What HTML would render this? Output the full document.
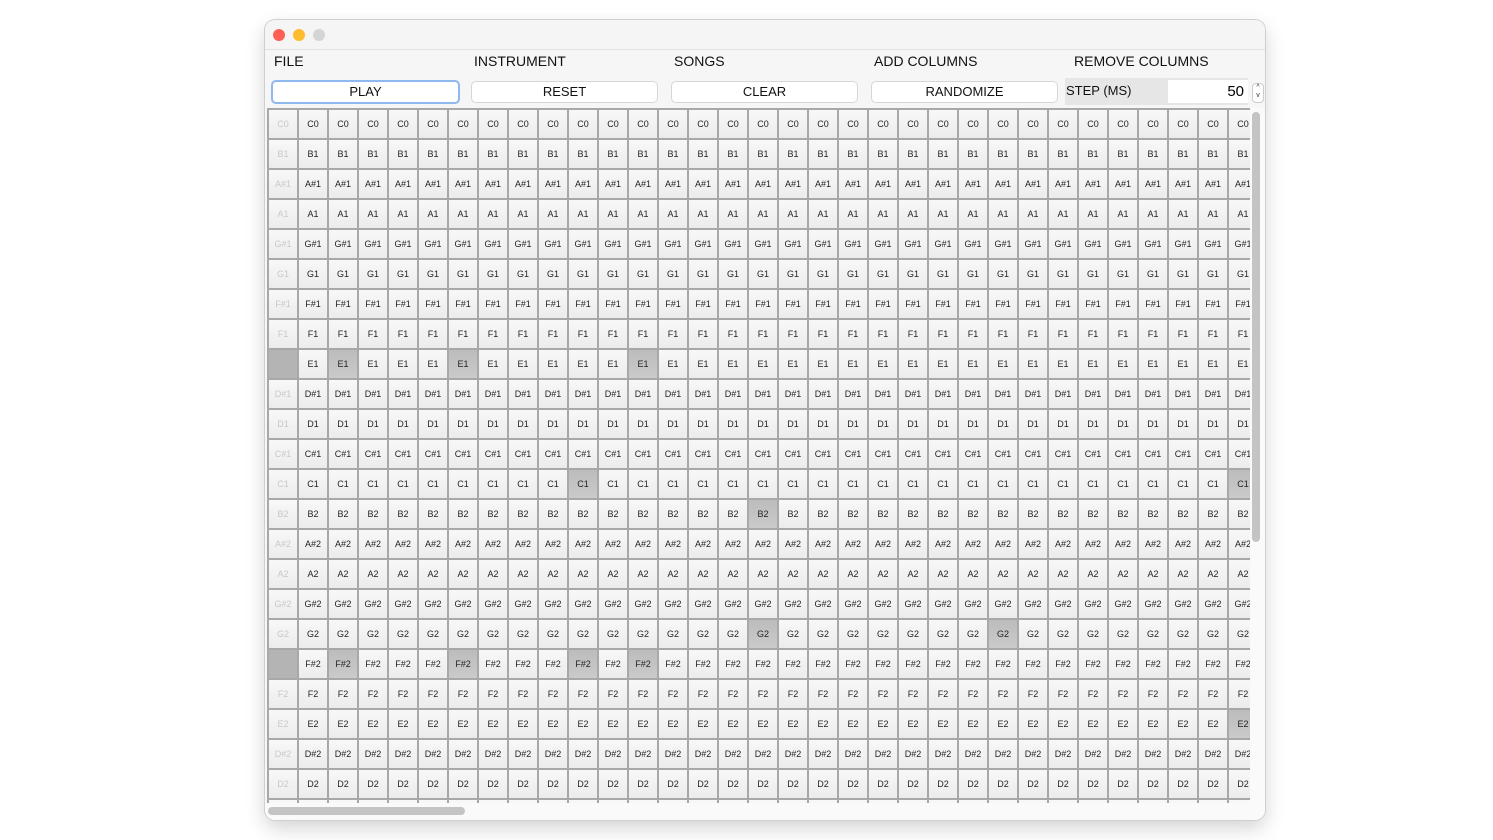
<!DOCTYPE html><html><head><style>
body{margin:0;width:1493px;height:840px;background:#fff;font-family:"Liberation Sans",sans-serif;position:relative;overflow:hidden}
.win{position:absolute;left:265px;top:20px;width:1000px;height:800px;border-radius:10px;background:#f6f6f6;box-shadow:0 0 0 1px #cfcfcf,0 8px 20px rgba(0,0,0,.18);overflow:hidden}
.tb{height:29px;border-bottom:1px solid #e2e2e2;background:#f5f5f5}
.dot{position:absolute;top:9px;width:12px;height:12px;border-radius:50%}
.menu{position:absolute;top:33px;font-size:14px;color:#111}
.btn{position:absolute;top:61px;width:185px;height:20px;border:1px solid #d6d6d6;border-radius:5px;background:#fff;font-size:13px;text-align:center;line-height:20px;color:#111}
.grid{position:absolute;left:2px;top:88px;width:981px;height:695px;overflow:hidden;background:#f4f4f4;border-top:2px solid #a8a8a8;border-left:2px solid #a8a8a8}
.r{display:flex;white-space:nowrap;width:1100px}
.r i,.r u,.r s{flex:0 0 28px;height:28px;border-right:2px solid #a8a8a8;border-bottom:2px solid #a8a8a8;font-style:normal;text-decoration:none;font-size:9px;line-height:28px;text-align:center;color:#222;background:linear-gradient(#f8f8f8,#ececec)}
.r u{background:linear-gradient(#bcbcbc,#cacaca)}
.r s{color:#c8c8c8}
.r s.h{background:#b4b4b4;color:#b4b4b4}
</style></head><body>
<div class="win">
<div class="tb"></div>
<div class="dot" style="left:8px;background:#fe5f57"></div>
<div class="dot" style="left:28px;background:#febc2e"></div>
<div class="dot" style="left:48px;background:#d5d5d5"></div>
<div class="menu" style="left:9px">FILE</div>
<div class="menu" style="left:209px">INSTRUMENT</div>
<div class="menu" style="left:409px">SONGS</div>
<div class="menu" style="left:609px">ADD COLUMNS</div>
<div class="menu" style="left:809px">REMOVE COLUMNS</div>
<div class="btn" style="left:6px;border:2px solid #8fb9ee;top:60px">PLAY</div>
<div class="btn" style="left:206px">RESET</div>
<div class="btn" style="left:406px">CLEAR</div>
<div class="btn" style="left:606px">RANDOMIZE</div>
<div style="position:absolute;left:800px;top:58px;width:183px;height:27px;background:#e6e6e6"></div>
<div style="position:absolute;left:801px;top:63px;font-size:13px;color:#111">STEP (MS)</div>
<div style="position:absolute;left:903px;top:60px;width:80px;height:23px;background:#fff;font-size:15px;text-align:right;line-height:23px;box-sizing:border-box;padding-right:4px">50</div>
<div style="position:absolute;left:987px;top:63px;width:10px;height:18px;border:1px solid #ccc;border-radius:4px;background:#fff;font-size:7px;line-height:8px;text-align:center;color:#333">^<br>v</div>
<div class="grid">
<div class="r"><s>C0</s><i>C0</i><i>C0</i><i>C0</i><i>C0</i><i>C0</i><i>C0</i><i>C0</i><i>C0</i><i>C0</i><i>C0</i><i>C0</i><i>C0</i><i>C0</i><i>C0</i><i>C0</i><i>C0</i><i>C0</i><i>C0</i><i>C0</i><i>C0</i><i>C0</i><i>C0</i><i>C0</i><i>C0</i><i>C0</i><i>C0</i><i>C0</i><i>C0</i><i>C0</i><i>C0</i><i>C0</i><i>C0</i></div>
<div class="r"><s>B1</s><i>B1</i><i>B1</i><i>B1</i><i>B1</i><i>B1</i><i>B1</i><i>B1</i><i>B1</i><i>B1</i><i>B1</i><i>B1</i><i>B1</i><i>B1</i><i>B1</i><i>B1</i><i>B1</i><i>B1</i><i>B1</i><i>B1</i><i>B1</i><i>B1</i><i>B1</i><i>B1</i><i>B1</i><i>B1</i><i>B1</i><i>B1</i><i>B1</i><i>B1</i><i>B1</i><i>B1</i><i>B1</i></div>
<div class="r"><s>A#1</s><i>A#1</i><i>A#1</i><i>A#1</i><i>A#1</i><i>A#1</i><i>A#1</i><i>A#1</i><i>A#1</i><i>A#1</i><i>A#1</i><i>A#1</i><i>A#1</i><i>A#1</i><i>A#1</i><i>A#1</i><i>A#1</i><i>A#1</i><i>A#1</i><i>A#1</i><i>A#1</i><i>A#1</i><i>A#1</i><i>A#1</i><i>A#1</i><i>A#1</i><i>A#1</i><i>A#1</i><i>A#1</i><i>A#1</i><i>A#1</i><i>A#1</i><i>A#1</i></div>
<div class="r"><s>A1</s><i>A1</i><i>A1</i><i>A1</i><i>A1</i><i>A1</i><i>A1</i><i>A1</i><i>A1</i><i>A1</i><i>A1</i><i>A1</i><i>A1</i><i>A1</i><i>A1</i><i>A1</i><i>A1</i><i>A1</i><i>A1</i><i>A1</i><i>A1</i><i>A1</i><i>A1</i><i>A1</i><i>A1</i><i>A1</i><i>A1</i><i>A1</i><i>A1</i><i>A1</i><i>A1</i><i>A1</i><i>A1</i></div>
<div class="r"><s>G#1</s><i>G#1</i><i>G#1</i><i>G#1</i><i>G#1</i><i>G#1</i><i>G#1</i><i>G#1</i><i>G#1</i><i>G#1</i><i>G#1</i><i>G#1</i><i>G#1</i><i>G#1</i><i>G#1</i><i>G#1</i><i>G#1</i><i>G#1</i><i>G#1</i><i>G#1</i><i>G#1</i><i>G#1</i><i>G#1</i><i>G#1</i><i>G#1</i><i>G#1</i><i>G#1</i><i>G#1</i><i>G#1</i><i>G#1</i><i>G#1</i><i>G#1</i><i>G#1</i></div>
<div class="r"><s>G1</s><i>G1</i><i>G1</i><i>G1</i><i>G1</i><i>G1</i><i>G1</i><i>G1</i><i>G1</i><i>G1</i><i>G1</i><i>G1</i><i>G1</i><i>G1</i><i>G1</i><i>G1</i><i>G1</i><i>G1</i><i>G1</i><i>G1</i><i>G1</i><i>G1</i><i>G1</i><i>G1</i><i>G1</i><i>G1</i><i>G1</i><i>G1</i><i>G1</i><i>G1</i><i>G1</i><i>G1</i><i>G1</i></div>
<div class="r"><s>F#1</s><i>F#1</i><i>F#1</i><i>F#1</i><i>F#1</i><i>F#1</i><i>F#1</i><i>F#1</i><i>F#1</i><i>F#1</i><i>F#1</i><i>F#1</i><i>F#1</i><i>F#1</i><i>F#1</i><i>F#1</i><i>F#1</i><i>F#1</i><i>F#1</i><i>F#1</i><i>F#1</i><i>F#1</i><i>F#1</i><i>F#1</i><i>F#1</i><i>F#1</i><i>F#1</i><i>F#1</i><i>F#1</i><i>F#1</i><i>F#1</i><i>F#1</i><i>F#1</i></div>
<div class="r"><s>F1</s><i>F1</i><i>F1</i><i>F1</i><i>F1</i><i>F1</i><i>F1</i><i>F1</i><i>F1</i><i>F1</i><i>F1</i><i>F1</i><i>F1</i><i>F1</i><i>F1</i><i>F1</i><i>F1</i><i>F1</i><i>F1</i><i>F1</i><i>F1</i><i>F1</i><i>F1</i><i>F1</i><i>F1</i><i>F1</i><i>F1</i><i>F1</i><i>F1</i><i>F1</i><i>F1</i><i>F1</i><i>F1</i></div>
<div class="r"><s class="h">E1</s><i>E1</i><u>E1</u><i>E1</i><i>E1</i><i>E1</i><u>E1</u><i>E1</i><i>E1</i><i>E1</i><i>E1</i><i>E1</i><u>E1</u><i>E1</i><i>E1</i><i>E1</i><i>E1</i><i>E1</i><i>E1</i><i>E1</i><i>E1</i><i>E1</i><i>E1</i><i>E1</i><i>E1</i><i>E1</i><i>E1</i><i>E1</i><i>E1</i><i>E1</i><i>E1</i><i>E1</i><i>E1</i></div>
<div class="r"><s>D#1</s><i>D#1</i><i>D#1</i><i>D#1</i><i>D#1</i><i>D#1</i><i>D#1</i><i>D#1</i><i>D#1</i><i>D#1</i><i>D#1</i><i>D#1</i><i>D#1</i><i>D#1</i><i>D#1</i><i>D#1</i><i>D#1</i><i>D#1</i><i>D#1</i><i>D#1</i><i>D#1</i><i>D#1</i><i>D#1</i><i>D#1</i><i>D#1</i><i>D#1</i><i>D#1</i><i>D#1</i><i>D#1</i><i>D#1</i><i>D#1</i><i>D#1</i><i>D#1</i></div>
<div class="r"><s>D1</s><i>D1</i><i>D1</i><i>D1</i><i>D1</i><i>D1</i><i>D1</i><i>D1</i><i>D1</i><i>D1</i><i>D1</i><i>D1</i><i>D1</i><i>D1</i><i>D1</i><i>D1</i><i>D1</i><i>D1</i><i>D1</i><i>D1</i><i>D1</i><i>D1</i><i>D1</i><i>D1</i><i>D1</i><i>D1</i><i>D1</i><i>D1</i><i>D1</i><i>D1</i><i>D1</i><i>D1</i><i>D1</i></div>
<div class="r"><s>C#1</s><i>C#1</i><i>C#1</i><i>C#1</i><i>C#1</i><i>C#1</i><i>C#1</i><i>C#1</i><i>C#1</i><i>C#1</i><i>C#1</i><i>C#1</i><i>C#1</i><i>C#1</i><i>C#1</i><i>C#1</i><i>C#1</i><i>C#1</i><i>C#1</i><i>C#1</i><i>C#1</i><i>C#1</i><i>C#1</i><i>C#1</i><i>C#1</i><i>C#1</i><i>C#1</i><i>C#1</i><i>C#1</i><i>C#1</i><i>C#1</i><i>C#1</i><i>C#1</i></div>
<div class="r"><s>C1</s><i>C1</i><i>C1</i><i>C1</i><i>C1</i><i>C1</i><i>C1</i><i>C1</i><i>C1</i><i>C1</i><u>C1</u><i>C1</i><i>C1</i><i>C1</i><i>C1</i><i>C1</i><i>C1</i><i>C1</i><i>C1</i><i>C1</i><i>C1</i><i>C1</i><i>C1</i><i>C1</i><i>C1</i><i>C1</i><i>C1</i><i>C1</i><i>C1</i><i>C1</i><i>C1</i><i>C1</i><u>C1</u></div>
<div class="r"><s>B2</s><i>B2</i><i>B2</i><i>B2</i><i>B2</i><i>B2</i><i>B2</i><i>B2</i><i>B2</i><i>B2</i><i>B2</i><i>B2</i><i>B2</i><i>B2</i><i>B2</i><i>B2</i><u>B2</u><i>B2</i><i>B2</i><i>B2</i><i>B2</i><i>B2</i><i>B2</i><i>B2</i><i>B2</i><i>B2</i><i>B2</i><i>B2</i><i>B2</i><i>B2</i><i>B2</i><i>B2</i><i>B2</i></div>
<div class="r"><s>A#2</s><i>A#2</i><i>A#2</i><i>A#2</i><i>A#2</i><i>A#2</i><i>A#2</i><i>A#2</i><i>A#2</i><i>A#2</i><i>A#2</i><i>A#2</i><i>A#2</i><i>A#2</i><i>A#2</i><i>A#2</i><i>A#2</i><i>A#2</i><i>A#2</i><i>A#2</i><i>A#2</i><i>A#2</i><i>A#2</i><i>A#2</i><i>A#2</i><i>A#2</i><i>A#2</i><i>A#2</i><i>A#2</i><i>A#2</i><i>A#2</i><i>A#2</i><i>A#2</i></div>
<div class="r"><s>A2</s><i>A2</i><i>A2</i><i>A2</i><i>A2</i><i>A2</i><i>A2</i><i>A2</i><i>A2</i><i>A2</i><i>A2</i><i>A2</i><i>A2</i><i>A2</i><i>A2</i><i>A2</i><i>A2</i><i>A2</i><i>A2</i><i>A2</i><i>A2</i><i>A2</i><i>A2</i><i>A2</i><i>A2</i><i>A2</i><i>A2</i><i>A2</i><i>A2</i><i>A2</i><i>A2</i><i>A2</i><i>A2</i></div>
<div class="r"><s>G#2</s><i>G#2</i><i>G#2</i><i>G#2</i><i>G#2</i><i>G#2</i><i>G#2</i><i>G#2</i><i>G#2</i><i>G#2</i><i>G#2</i><i>G#2</i><i>G#2</i><i>G#2</i><i>G#2</i><i>G#2</i><i>G#2</i><i>G#2</i><i>G#2</i><i>G#2</i><i>G#2</i><i>G#2</i><i>G#2</i><i>G#2</i><i>G#2</i><i>G#2</i><i>G#2</i><i>G#2</i><i>G#2</i><i>G#2</i><i>G#2</i><i>G#2</i><i>G#2</i></div>
<div class="r"><s>G2</s><i>G2</i><i>G2</i><i>G2</i><i>G2</i><i>G2</i><i>G2</i><i>G2</i><i>G2</i><i>G2</i><i>G2</i><i>G2</i><i>G2</i><i>G2</i><i>G2</i><i>G2</i><u>G2</u><i>G2</i><i>G2</i><i>G2</i><i>G2</i><i>G2</i><i>G2</i><i>G2</i><u>G2</u><i>G2</i><i>G2</i><i>G2</i><i>G2</i><i>G2</i><i>G2</i><i>G2</i><i>G2</i></div>
<div class="r"><s class="h">F#2</s><i>F#2</i><u>F#2</u><i>F#2</i><i>F#2</i><i>F#2</i><u>F#2</u><i>F#2</i><i>F#2</i><i>F#2</i><u>F#2</u><i>F#2</i><u>F#2</u><i>F#2</i><i>F#2</i><i>F#2</i><i>F#2</i><i>F#2</i><i>F#2</i><i>F#2</i><i>F#2</i><i>F#2</i><i>F#2</i><i>F#2</i><i>F#2</i><i>F#2</i><i>F#2</i><i>F#2</i><i>F#2</i><i>F#2</i><i>F#2</i><i>F#2</i><i>F#2</i></div>
<div class="r"><s>F2</s><i>F2</i><i>F2</i><i>F2</i><i>F2</i><i>F2</i><i>F2</i><i>F2</i><i>F2</i><i>F2</i><i>F2</i><i>F2</i><i>F2</i><i>F2</i><i>F2</i><i>F2</i><i>F2</i><i>F2</i><i>F2</i><i>F2</i><i>F2</i><i>F2</i><i>F2</i><i>F2</i><i>F2</i><i>F2</i><i>F2</i><i>F2</i><i>F2</i><i>F2</i><i>F2</i><i>F2</i><i>F2</i></div>
<div class="r"><s>E2</s><i>E2</i><i>E2</i><i>E2</i><i>E2</i><i>E2</i><i>E2</i><i>E2</i><i>E2</i><i>E2</i><i>E2</i><i>E2</i><i>E2</i><i>E2</i><i>E2</i><i>E2</i><i>E2</i><i>E2</i><i>E2</i><i>E2</i><i>E2</i><i>E2</i><i>E2</i><i>E2</i><i>E2</i><i>E2</i><i>E2</i><i>E2</i><i>E2</i><i>E2</i><i>E2</i><i>E2</i><u>E2</u></div>
<div class="r"><s>D#2</s><i>D#2</i><i>D#2</i><i>D#2</i><i>D#2</i><i>D#2</i><i>D#2</i><i>D#2</i><i>D#2</i><i>D#2</i><i>D#2</i><i>D#2</i><i>D#2</i><i>D#2</i><i>D#2</i><i>D#2</i><i>D#2</i><i>D#2</i><i>D#2</i><i>D#2</i><i>D#2</i><i>D#2</i><i>D#2</i><i>D#2</i><i>D#2</i><i>D#2</i><i>D#2</i><i>D#2</i><i>D#2</i><i>D#2</i><i>D#2</i><i>D#2</i><i>D#2</i></div>
<div class="r"><s>D2</s><i>D2</i><i>D2</i><i>D2</i><i>D2</i><i>D2</i><i>D2</i><i>D2</i><i>D2</i><i>D2</i><i>D2</i><i>D2</i><i>D2</i><i>D2</i><i>D2</i><i>D2</i><i>D2</i><i>D2</i><i>D2</i><i>D2</i><i>D2</i><i>D2</i><i>D2</i><i>D2</i><i>D2</i><i>D2</i><i>D2</i><i>D2</i><i>D2</i><i>D2</i><i>D2</i><i>D2</i><i>D2</i></div>
<div class="r"><s>C#2</s><i>C#2</i><i>C#2</i><i>C#2</i><i>C#2</i><i>C#2</i><i>C#2</i><i>C#2</i><i>C#2</i><i>C#2</i><i>C#2</i><i>C#2</i><i>C#2</i><i>C#2</i><i>C#2</i><i>C#2</i><i>C#2</i><i>C#2</i><i>C#2</i><i>C#2</i><i>C#2</i><i>C#2</i><i>C#2</i><i>C#2</i><i>C#2</i><i>C#2</i><i>C#2</i><i>C#2</i><i>C#2</i><i>C#2</i><i>C#2</i><i>C#2</i><i>C#2</i></div>
</div>
<div style="position:absolute;left:0;top:783px;width:1000px;height:17px;background:#fafafa"></div>
<div style="position:absolute;left:3px;top:787px;width:197px;height:8px;border-radius:4px;background:#c4c4c4"></div>
<div style="position:absolute;left:985px;top:88px;width:15px;height:695px;background:#fafafa"></div>
<div style="position:absolute;left:987px;top:92px;width:8px;height:430px;border-radius:4px;background:#c4c4c4"></div>
</div>
</body></html>
